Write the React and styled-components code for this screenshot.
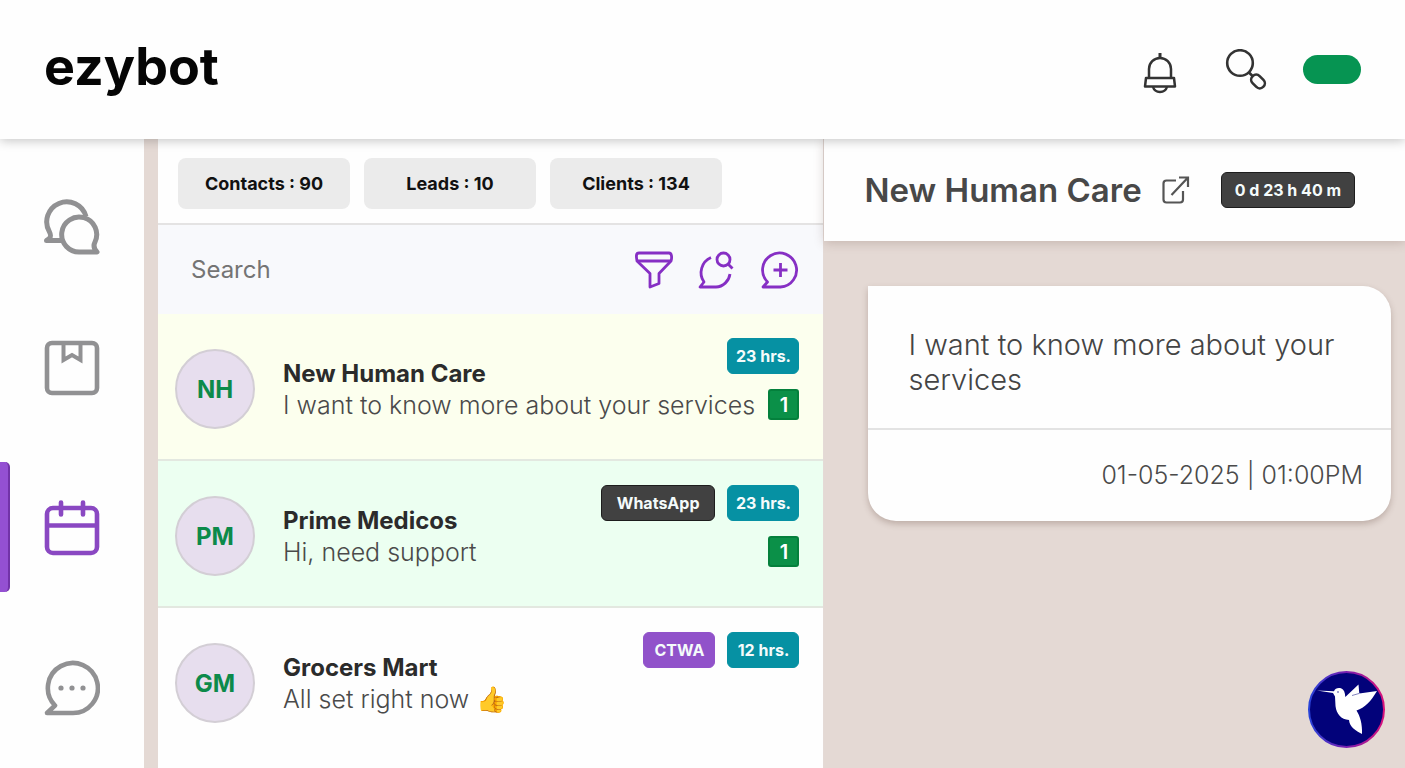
import React from "react";
import styled, { createGlobalStyle } from "styled-components";

const GlobalStyle = createGlobalStyle`
  *, *::before, *::after { box-sizing: border-box; }
  body { margin: 0; background: #fefefe; font-family: Inter, "Liberation Sans", sans-serif; color: #2b2b2b; }
  button { font-family: inherit; border: 0; padding: 0; background: none; cursor: pointer; }
  h1, h2, h3, p, ul { margin: 0; padding: 0; }
  svg { display: block; }
`;

const Page = styled.div`
  display: flex;
  flex-direction: column;
  min-height: 100vh;
`;

const TopBar = styled.header`
  display: flex;
  align-items: center;
  justify-content: space-between;
  height: 139px;
  padding: 0 44px;
  background: #fefefe;
  box-shadow: 0 2px 10px rgba(0, 0, 0, 0.22);
  position: relative;
  z-index: 2;
`;

const Brand = styled.h1`
  padding-bottom: 6px;
  font-size: 52px;
  line-height: 64px;
  font-weight: 700;
  color: #050505;
`;

const TopActions = styled.div`
  display: flex;
  align-items: center;
  gap: 28px;
`;

const IconButton = styled.button`
  display: flex;
  align-items: center;
  justify-content: center;
  min-width: ${(p) => p.$width || 0}px;
  color: ${(p) => p.$color || "#333"};
`;

const StatusPill = styled.button`
  width: 58px;
  height: 29px;
  border-radius: 15px;
  background: #069452;
`;

const Body = styled.div`
  display: flex;
  flex: 1;
  background: #e4d9d4;
`;

const Rail = styled.nav`
  flex: none;
  display: flex;
  flex-direction: column;
  width: 144px;
  margin-right: 14px;
  padding-top: 27px;
  background: #fefefe;
`;

const RailItem = styled.button`
  display: flex;
  align-items: center;
  justify-content: center;
  position: relative;
  height: ${(p) => (p.$first ? 122 : 160)}px;
  color: ${(p) => (p.$active ? "#8a48c2" : "#919193")};

  &::before {
    content: "";
    display: ${(p) => (p.$active ? "block" : "none")};
    position: absolute;
    left: 0;
    top: 14px;
    width: 10px;
    height: 130px;
    border-radius: 0 5px 5px 0;
    background: #9450d2;
    border-right: 2px solid #7233a8;
  }
`;

const ListPanel = styled.main`
  flex: 666 1 0;
  min-width: 0;
  background: #fefefe;
  border-right: 1px solid #e4dad6;
`;

const Stats = styled.div`
  display: flex;
  gap: 14px;
  padding: 19px 20px 14px;
  border-bottom: 2px solid #e4e3e3;
`;

const StatButton = styled.button`
  width: 172px;
  height: 51px;
  border-radius: 8px;
  background: #ebebeb;
  color: #111;
  font-size: 18px;
  font-weight: 700;
`;

const SearchBar = styled.form`
  display: flex;
  align-items: center;
  gap: 25px;
  height: 89px;
  padding: 0 24px 0 33px;
  background: #f8f9fc;
`;

const SearchInput = styled.input`
  flex: 1;
  min-width: 0;
  padding: 0;
  border: 0;
  outline: 0;
  background: transparent;
  font-family: inherit;
  font-size: 24px;
  line-height: 32px;
  color: #444;
  &::placeholder { color: #747474; opacity: 1; }
`;

const Rows = styled.ul`
  list-style: none;
`;

const Row = styled.li`
  display: flex;
  gap: 28px;
  height: 147px;
  padding: 24px 24px 0 17px;
  background: ${(p) => p.$tint};
  border-bottom: ${(p) => (p.$last ? "0" : "2px solid #e3e8e0")};
`;

const Avatar = styled.span`
  flex: none;
  display: flex;
  align-items: center;
  justify-content: center;
  width: 80px;
  height: 80px;
  margin-top: 11px;
  border: 2px solid #d3ced5;
  border-radius: 50%;
  background: #e7deee;
  color: #0c8a4a;
  font-size: 24px;
  font-weight: 700;
`;

const RowText = styled.div`
  flex: 1;
  min-width: 0;
`;

const NameLine = styled.div`
  display: flex;
  justify-content: space-between;
  height: 51px;
`;

const MessageLine = styled.div`
  display: flex;
  justify-content: space-between;
  align-items: center;
  height: 31px;
`;

const Name = styled.h3`
  align-self: flex-end;
  font-size: 24px;
  line-height: 30px;
  font-weight: 700;
  white-space: nowrap;
  color: #2b2b2b;
`;

const Preview = styled.p`
  font-size: 25px;
  line-height: 30px;
  font-weight: 300;
  white-space: nowrap;
  color: #4a4a4a;
`;

const Tags = styled.div`
  display: flex;
  gap: 12px;
`;

const tagColors = { teal: "#0691a3", dark: "#414141", purple: "#9152ca" };
const tagEdges = { teal: "#0691a3", dark: "#1d1d1d", purple: "#9152ca" };

const Tag = styled.span`
  display: flex;
  align-items: center;
  justify-content: center;
  height: 36px;
  min-width: 72px;
  padding: 0 ${(p) => (p.$kind === "dark" ? 15 : 6)}px;
  border: 1px solid ${(p) => tagEdges[p.$kind]};
  border-radius: 6px;
  background: ${(p) => tagColors[p.$kind]};
  color: #f4fbfb;
  font-size: 16px;
  font-weight: 700;
  white-space: nowrap;
`;

const Unread = styled.span`
  display: flex;
  align-items: center;
  justify-content: center;
  width: 31px;
  height: 31px;
  border: 2px solid #04803c;
  border-radius: 3px;
  background: #0b9048;
  color: #fff;
  font-size: 20px;
  line-height: 24px;
  font-weight: 600;
`;

const ChatPanel = styled.section`
  flex: 581 1 0;
  min-width: 0;
`;

const ChatHeader = styled.div`
  display: flex;
  align-items: center;
  height: 102px;
  padding: 0 20px 0 40px;
  background: #fefefe;
  box-shadow: 0 2px 10px rgba(90, 60, 50, 0.22);
`;

const ChatTitle = styled.h2`
  font-size: 33px;
  line-height: 40px;
  font-weight: 600;
  color: #484848;
  white-space: nowrap;
  margin-right: 20px;
`;

const Timer = styled(Tag)`
  margin-left: 31px;
  padding: 0 13px;
`;

const Bubble = styled.article`
  margin: 45px 14px 0 44px;
  border-radius: 0 28px 28px 28px;
  background: #fefefe;
  box-shadow: 0 3px 6px rgba(90, 60, 50, 0.28);
`;

const BubbleText = styled.p`
  padding: 41px 40px 31px;
  border-bottom: 2px solid #e3e3e3;
  font-size: 29px;
  line-height: 35px;
  font-weight: 300;
  color: #444;
`;

const BubbleTime = styled.p`
  padding: 27px 28px 28px;
  font-size: 25px;
  line-height: 36px;
  font-weight: 300;
  text-align: right;
  color: #4a4a4a;
`;

const HelperButton = styled.button`
  position: fixed;
  right: 20px;
  bottom: 20px;
  z-index: 3;
`;

function BellIcon() {
  return (
    <svg width="34" height="48" viewBox="0 -6 34 48" fill="none" stroke="currentColor" strokeWidth="2.500" strokeLinejoin="round">
      <path d="M17 1v5" strokeWidth="3" />
      <path d="M6 26V17a11 11 0 0 1 22 0v9" />
      <path d="M3 26h28l1 8.500H2z" />
      <path d="M10 35c2 6.500 12 6.500 14 0" />
    </svg>
  );
}

function SearchIcon() {
  return (
    <svg width="42" height="42" viewBox="0 0 42 42" fill="none" stroke="currentColor" strokeWidth="2.600">
      <circle cx="15" cy="14" r="12.800" />
      <path d="M24 23.500l4 4" />
      <rect x="25.500" y="27.500" width="15" height="10" rx="4.800" transform="rotate(45 33 32.500)" />
    </svg>
  );
}

function ChatsIcon() {
  return (
    <svg width="56" height="56" viewBox="0 0 56 56" fill="none" stroke="currentColor" strokeWidth="5" strokeLinejoin="round">
      <path d="M18 41.500H2.500C7 39 7.500 37 5.500 33A20 20 0 1 1 42 17.500" />
      <path d="M53 53H36A17.500 17.500 0 1 1 51 43c-2 4-1 7 2 10z" />
    </svg>
  );
}

function BookIcon() {
  return (
    <svg width="56" height="56" viewBox="0 0 56 56" fill="none" stroke="currentColor" strokeWidth="4.600">
      <rect x="3" y="3" width="50" height="50" rx="5" />
      <path d="M19.500 4v16l8.500-5 8.500 5V4" strokeWidth="4" />
    </svg>
  );
}

function CalendarIcon() {
  return (
    <svg width="56" height="56" viewBox="0 0 56 56" fill="none" stroke="currentColor" strokeWidth="4.600">
      <rect x="3" y="8" width="50" height="45" rx="6" />
      <path d="M3 25.500h50" />
      <path d="M17 2.500v12M39 2.500v12" strokeLinecap="round" />
    </svg>
  );
}

function MessageDotsIcon() {
  return (
    <svg width="56" height="56" viewBox="0 0 56 56" fill="none" stroke="currentColor" strokeWidth="4.600" strokeLinejoin="round">
      <path d="M28 53H3l8-7.500A25 25 0 1 1 28 53z" />
      <g fill="currentColor" stroke="none">
        <circle cx="17" cy="28" r="2.600" />
        <circle cx="28" cy="28" r="2.600" />
        <circle cx="39" cy="28" r="2.600" />
      </g>
    </svg>
  );
}

function FilterIcon() {
  return (
    <svg width="38" height="38" viewBox="0 0 38 38" fill="none" stroke="currentColor" strokeWidth="2.800" strokeLinejoin="round">
      <path d="M4 2h30c3 0 3 5 2 8L24 22.500v10L15 36V22.500L2 10C1 5 1 2 4 2z" />
      <path d="M2 10h34" />
    </svg>
  );
}

function ChatSearchIcon() {
  return (
    <svg width="38" height="38" viewBox="0 0 38 38" fill="none" stroke="currentColor" strokeWidth="2.800" strokeLinejoin="round">
      <path d="M13 6.500A16.500 16.500 0 0 0 6 31l-4 5h16c7 0 13-6 14-13" />
      <circle cx="25.500" cy="8.500" r="6.500" />
      <path d="M30 13l4.500 4.500" />
    </svg>
  );
}

function ChatPlusIcon() {
  return (
    <svg width="38" height="38" viewBox="0 0 38 38" fill="none" stroke="currentColor" strokeWidth="2.800" strokeLinejoin="round">
      <path d="M19.500 36H2l4.500-5A17 17 0 1 1 19.500 36z" />
      <path d="M19.500 12v14M12.500 19h14" />
    </svg>
  );
}

function ExternalIcon() {
  return (
    <svg width="28" height="30" viewBox="0 0 28 30" fill="none" stroke="currentColor" strokeWidth="2.200">
      <path d="M14 5.500H4.500A3 3 0 0 0 1.500 8.500v16a3 3 0 0 0 3 3H18a3 3 0 0 0 3-3V16" />
      <path d="M9.500 20L26 2.500M17 2.500h9V12" />
    </svg>
  );
}

function BirdLogo() {
  return (
    <svg width="77" height="77" viewBox="0 0 77 77">
      <defs>
        <linearGradient id="ring" x1="0" x2="1" y1="0" y2="0">
          <stop offset="0" stopColor="#2743d8" />
          <stop offset="0.5" stopColor="#7a1fb0" />
          <stop offset="1" stopColor="#d8127a" />
        </linearGradient>
      </defs>
      <circle cx="38.500" cy="38.500" r="37.500" fill="#02027a" stroke="url(#ring)" strokeWidth="2" />
      <path
        fill="#fff"
        d="M9 19.500L26 20.200C27 17.500 30 16.300 33 17.300C36 18.500 37 21.500 37.300 26L50.500 13.500L51.300 22.500L69 20C63 30 57 37 48.500 39.500C52 45 54.500 53 54 63C48 60 41.500 56 41 49C33 48.500 28.500 43 27.500 35L27 25.500L25 22Z"
      />
      <circle cx="30" cy="21" r="0.700" fill="#02027a" />
      <path d="M44 24.500L51 22.500" stroke="#02027a" strokeWidth="0.500" />
    </svg>
  );
}

const stats = ["Contacts : 90", "Leads : 10", "Clients : 134"];

const conversations = [
  { initials: "NH", name: "New Human Care", text: "I want to know more about your services", tint: "#fcffee", tags: [["teal", "23 hrs."]], unread: 1 },
  { initials: "PM", name: "Prime Medicos", text: "Hi, need support", tint: "#ecfff1", tags: [["dark", "WhatsApp"], ["teal", "23 hrs."]], unread: 1 },
  { initials: "GM", name: "Grocers Mart", text: "All set right now 👍", tint: "#fefefe", tags: [["purple", "CTWA"], ["teal", "12 hrs."]] },
];

export default function App() {
  return (
    <Page>
      <GlobalStyle />
      <TopBar>
        <Brand>ezybot</Brand>
        <TopActions>
          <IconButton $width={58} aria-label="Notifications"><BellIcon /></IconButton>
          <IconButton $width={58} aria-label="Search"><SearchIcon /></IconButton>
          <StatusPill aria-label="Online status" />
        </TopActions>
      </TopBar>
      <Body>
        <Rail aria-label="Main">
          <RailItem $first aria-label="Chats"><ChatsIcon /></RailItem>
          <RailItem aria-label="Saved"><BookIcon /></RailItem>
          <RailItem $active aria-label="Calendar"><CalendarIcon /></RailItem>
          <RailItem aria-label="Messages"><MessageDotsIcon /></RailItem>
        </Rail>
        <ListPanel>
          <Stats>
            {stats.map((s) => <StatButton key={s}>{s}</StatButton>)}
          </Stats>
          <SearchBar onSubmit={(e) => e.preventDefault()}>
            <SearchInput type="text" placeholder="Search" aria-label="Search conversations" />
            <IconButton type="button" $color="#862fc4" aria-label="Filter"><FilterIcon /></IconButton>
            <IconButton type="button" $color="#862fc4" aria-label="Find chat"><ChatSearchIcon /></IconButton>
            <IconButton type="button" $color="#862fc4" aria-label="New chat"><ChatPlusIcon /></IconButton>
          </SearchBar>
          <Rows>
            {conversations.map((c, i) => (
              <Row key={c.initials} $tint={c.tint} $last={i === conversations.length - 1}>
                <Avatar>{c.initials}</Avatar>
                <RowText>
                  <NameLine>
                    <Name>{c.name}</Name>
                    <Tags>
                      {c.tags.map(([kind, label]) => <Tag key={label} $kind={kind}>{label}</Tag>)}
                    </Tags>
                  </NameLine>
                  <MessageLine>
                    <Preview>{c.text}</Preview>
                    {c.unread && <Unread>{c.unread}</Unread>}
                  </MessageLine>
                </RowText>
              </Row>
            ))}
          </Rows>
        </ListPanel>
        <ChatPanel>
          <ChatHeader>
            <ChatTitle>New Human Care</ChatTitle>
            <IconButton $color="#555" aria-label="Open contact"><ExternalIcon /></IconButton>
            <Timer $kind="dark">0 d 23 h 40 m</Timer>
          </ChatHeader>
          <Bubble>
            <BubbleText>I want to know more about your services</BubbleText>
            <BubbleTime>01-05-2025 | 01:00PM</BubbleTime>
          </Bubble>
        </ChatPanel>
      </Body>
      <HelperButton aria-label="Open assistant"><BirdLogo /></HelperButton>
    </Page>
  );
}
